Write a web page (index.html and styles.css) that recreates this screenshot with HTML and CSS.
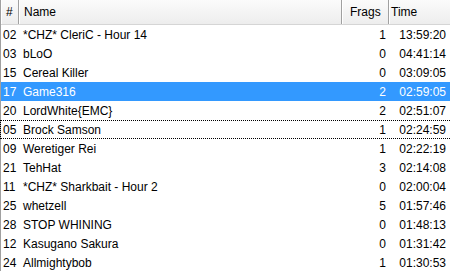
FILE: index.html
```html
<!DOCTYPE html>
<html lang="en">
<head>
    <meta charset="UTF-8">
    <title>Players</title>
    <link rel="stylesheet" href="styles.css">
</head>
<body>
    <div class="list">
        <div class="head">
            <div class="col-num">#</div>
            <div class="col-name">Name</div>
            <div class="col-frags">Frags</div>
            <div class="col-time">Time</div>
        </div>

        <div class="row"><span class="num">02</span><span class="name">*CHZ* CleriC - Hour 14</span><span class="frags">1</span><span class="time">13:59:20</span></div>
        <div class="row"><span class="num">03</span><span class="name">bLoO</span><span class="frags">0</span><span class="time">04:41:14</span></div>
        <div class="row"><span class="num">15</span><span class="name">Cereal Killer</span><span class="frags">0</span><span class="time">03:09:05</span></div>
        <div class="row selected"><span class="num">17</span><span class="name">Game316</span><span class="frags">2</span><span class="time">02:59:05</span></div>
        <div class="row"><span class="num">20</span><span class="name">LordWhite{EMC}</span><span class="frags">2</span><span class="time">02:51:07</span></div>
        <div class="row focused"><span class="num">05</span><span class="name">Brock Samson</span><span class="frags">1</span><span class="time">02:24:59</span></div>
        <div class="row"><span class="num">09</span><span class="name">Weretiger Rei</span><span class="frags">1</span><span class="time">02:22:19</span></div>
        <div class="row"><span class="num">21</span><span class="name">TehHat</span><span class="frags">3</span><span class="time">02:14:08</span></div>
        <div class="row"><span class="num">11</span><span class="name">*CHZ* Sharkbait - Hour 2</span><span class="frags">0</span><span class="time">02:00:04</span></div>
        <div class="row"><span class="num">25</span><span class="name">whetzell</span><span class="frags">5</span><span class="time">01:57:46</span></div>
        <div class="row"><span class="num">28</span><span class="name">STOP WHINING</span><span class="frags">0</span><span class="time">01:48:13</span></div>
        <div class="row"><span class="num">12</span><span class="name">Kasugano Sakura</span><span class="frags">0</span><span class="time">01:31:42</span></div>
        <div class="row"><span class="num">24</span><span class="name">Allmightybob</span><span class="frags">1</span><span class="time">01:30:53</span></div>
    </div>
</body>
</html>
```

FILE: styles.css
```css
body {
    margin: 0;
    padding: 0;
    background: #ffffff;
    font-family: 'Liberation Sans', Arial, sans-serif;
    font-size: 12px;
    color: #000000;
    overflow: hidden;
}

.list {
    width: 450px;
    height: 271px;
    border-left: 1px solid #a0a0a0;
    box-sizing: border-box;
}

/* --- Header --- */
.head {
    display: grid;
    grid-template-columns: 18px 323px 47px 1fr;
    height: 24px;
    background: linear-gradient(#fbfbfb, #ededed);
    border-bottom: 1px solid #d5d5d5;
}

.head > div {
    display: flex;
    align-items: center;
    padding-left: 5px;
    border-right: 1px solid #a0a0a0;
    box-shadow: inset 1px 0 0 #ffffff;
}

.head .col-time {
    border-right: none;
    padding-left: 2px;
}

.head .col-frags {
    padding-left: 8px;
}

/* --- Rows --- */
.row {
    display: grid;
    grid-template-columns: 22px 1fr 44px 60px;
    height: 19px;
    align-items: center;
    box-sizing: border-box;
}

.row .num {
    padding-left: 2px;
}

.row .frags {
    text-align: right;
    padding-right: 4px;
}

.row .time {
    text-align: right;
    padding-right: 4px;
}

.row.selected {
    background: #3399ff;
    color: #ffffff;
}

.row.focused {
    border-top: 1px dotted #000000;
    border-bottom: 1px dotted #000000;
    border-left: 1px dotted #000000;
    margin-left: -1px;
}
```
